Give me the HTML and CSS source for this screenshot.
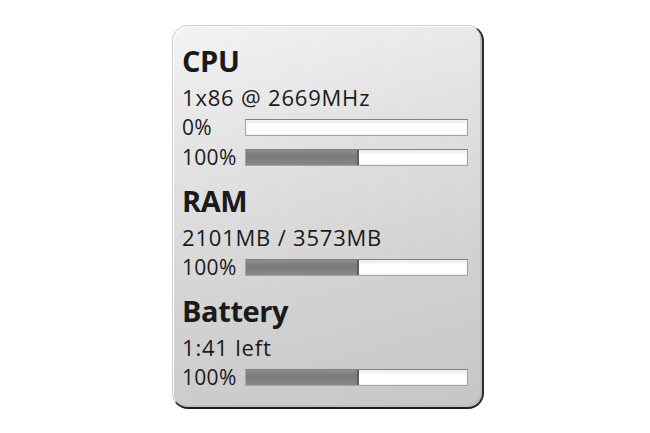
FILE: index.html
```html
<!DOCTYPE html>
<html>
<head>
<meta charset="utf-8">
<link rel="stylesheet" href="styles.css">
</head>
<body>
<div class="gadget">
  <section class="group">
    <h2 class="title">CPU</h2>
    <div class="sub">1x86 @ 2669MHz</div>
    <div class="row"><span class="pct">0%</span><div class="bar"><div class="fill empty" style="width:0%"></div></div></div>
    <div class="row"><span class="pct">100%</span><div class="bar"><div class="fill" style="width:50%"></div></div></div>
  </section>
  <section class="group">
    <h2 class="title">RAM</h2>
    <div class="sub">2101MB / 3573MB</div>
    <div class="row"><span class="pct">100%</span><div class="bar"><div class="fill" style="width:50%"></div></div></div>
  </section>
  <section class="group">
    <h2 class="title">Battery</h2>
    <div class="sub">1:41 left</div>
    <div class="row"><span class="pct">100%</span><div class="bar"><div class="fill" style="width:50%"></div></div></div>
  </section>
</div>
</body>
</html>
```
FILE: styles.css
```css
html, body {
  margin: 0;
  padding: 0;
  background: #ffffff;
}
body {
  width: 650px;
  height: 433px;
  overflow: hidden;
  font-family: "Open Sans", "Noto Sans", sans-serif;
  color: #1a1a1a;
}
.gadget {
  margin: 25px 0 0 172px;
  width: 300px;
  height: 364px;
  padding: 17px 0 0 9px;
  box-sizing: content-box;
  border-radius: 16px;
  background: linear-gradient(165deg, #f3f3f3 0%, #e3e3e3 30%, #d2d2d2 65%, #c6c6c6 100%);
  border: 1px solid #d0d0d0;
  border-right: 2px solid #2a2a2a;
  border-bottom: 2px solid #1e1e1e;
  box-shadow: inset 1px 1px 0 #ffffff, inset -2px -2px 0 #bdbdbd;
  display: flex;
  flex-direction: column;
  gap: 11px;
}
.group {
  display: flex;
  flex-direction: column;
}
.title {
  margin: 0;
  font-size: 29px;
  font-weight: 700;
  line-height: 36px;
  letter-spacing: -0.4px;
}
.sub {
  margin-top: 3px;
  font-size: 22px;
  line-height: 30px;
  letter-spacing: 0.8px;
}
.row {
  display: flex;
  align-items: center;
  height: 30px;
}
.pct {
  width: 63px;
  font-size: 21px;
  letter-spacing: 0.3px;
}
.bar {
  width: 221px;
  height: 15px;
  border: 1px solid #a4a4a4;
  border-top-color: #808080;
  background: linear-gradient(#e4e4e4, #ffffff 30%, #ffffff);
  box-shadow: inset 0 0 0 1px #f2f2f2;
  display: flex;
}
.fill {
  height: 100%;
  background: linear-gradient(#8e8e8e, #7a7a7a 40%, #888888);
  border-right: 2px solid #5e5e5e;
}
.fill.empty {
  border-right: none;
}
```
